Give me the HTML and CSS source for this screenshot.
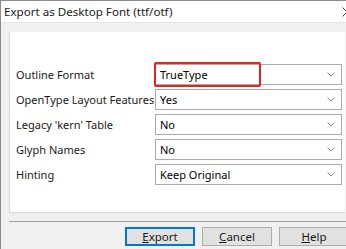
FILE: index.html
```html
<!DOCTYPE html>
<html lang="en">
<head>
    <meta charset="UTF-8">
    <title>Export as Desktop Font (ttf/otf)</title>
    <link rel="stylesheet" href="styles.css">
</head>
<body>
    <div class="window">
        <div class="titlebar">
            <span class="title">Export as Desktop Font (ttf/otf)</span>
            <svg class="close" width="10" height="10" viewBox="0 0 10 10"><path d="M0.5 0.5 L9.5 9.5 M9.5 0.5 L0.5 9.5" /></svg>
        </div>

        <div class="panel">
            <div class="form">
                <label>Outline Format</label>
                <div class="combo highlighted">
                    <span>TrueType</span>
                    <svg class="chevron" width="8" height="5" viewBox="0 0 8 5"><path d="M0.5 0.5 L4 4 L7.5 0.5" /></svg>
                    <div class="marker"></div>
                </div>

                <label>OpenType Layout Features</label>
                <div class="combo">
                    <span>Yes</span>
                    <svg class="chevron" width="8" height="5" viewBox="0 0 8 5"><path d="M0.5 0.5 L4 4 L7.5 0.5" /></svg>
                </div>

                <label>Legacy 'kern' Table</label>
                <div class="combo">
                    <span>No</span>
                    <svg class="chevron" width="8" height="5" viewBox="0 0 8 5"><path d="M0.5 0.5 L4 4 L7.5 0.5" /></svg>
                </div>

                <label>Glyph Names</label>
                <div class="combo">
                    <span>No</span>
                    <svg class="chevron" width="8" height="5" viewBox="0 0 8 5"><path d="M0.5 0.5 L4 4 L7.5 0.5" /></svg>
                </div>

                <label>Hinting</label>
                <div class="combo">
                    <span>Keep Original</span>
                    <svg class="chevron" width="8" height="5" viewBox="0 0 8 5"><path d="M0.5 0.5 L4 4 L7.5 0.5" /></svg>
                </div>
            </div>
        </div>

        <div class="separator"></div>

        <div class="buttons">
            <button class="default"><u>E</u>xport</button>
            <button><u>C</u>ancel</button>
            <button><u>H</u>elp</button>
        </div>
    </div>
</body>
</html>
```

FILE: styles.css
```css
* {
    box-sizing: border-box;
    margin: 0;
    padding: 0;
}

html, body {
    width: 346px;
    height: 249px;
    overflow: hidden;
}

body {
    background-color: #f0f0f0;
    font-family: 'Noto Sans', 'Open Sans', sans-serif;
    font-size: 11px;
    color: #000;
}

.window {
    height: 249px;
    border-top: 1px solid #8c8c8c;
    border-left: 1px solid #8c8c8c;
}

.titlebar {
    height: 22px;
    background: white;
    display: flex;
    align-items: center;
    justify-content: space-between;
    padding-left: 3px;
    border-bottom: 1px solid #e6e6e6;
}

.title {
    font-size: 11.6px;
    color: #1a1a1a;
    white-space: nowrap;
}

.close {
    fill: none;
    stroke: #444;
    stroke-width: 1;
    margin-right: -6px;
}

.panel {
    margin: 9px 1px 0 8px;
    height: 181px;
    background: white;
    border-left: 1px solid #dadada;
    border-bottom: 1px solid #dadada;
    padding: 32px 3px 0 6px;
}

.form {
    display: grid;
    grid-template-columns: 139px 187px;
    row-gap: 4px;
    align-items: center;
}

label {
    color: #1a1a1a;
    white-space: nowrap;
}

.combo {
    position: relative;
    height: 21px;
    border: 1px solid #ababab;
    display: flex;
    align-items: center;
    justify-content: space-between;
    padding: 0 6px 0 4px;
}

.chevron {
    fill: none;
    stroke: #8a8a8a;
    stroke-width: 1;
}

.marker {
    position: absolute;
    left: -2px;
    top: -3px;
    width: 107px;
    height: 25px;
    border: 2px solid #e5231b;
    border-radius: 2px;
}

.separator {
    margin: 8px 0 0 8px;
    height: 1px;
    background: #a0a0a0;
}

.buttons {
    display: flex;
    gap: 7px;
    padding-left: 124px;
    margin-top: 5px;
}

button {
    flex: 0 0 70px;
    height: 19px;
    background: #e1e1e1;
    border: 1px solid #adadad;
    font-family: 'Noto Sans', 'Open Sans', sans-serif;
    font-size: 11.5px;
    color: #1a1a1a;
    line-height: 1;
}

button.default {
    border: 1px solid #0078d7;
    box-shadow: inset 0 0 0 1px #0078d7;
}
```
